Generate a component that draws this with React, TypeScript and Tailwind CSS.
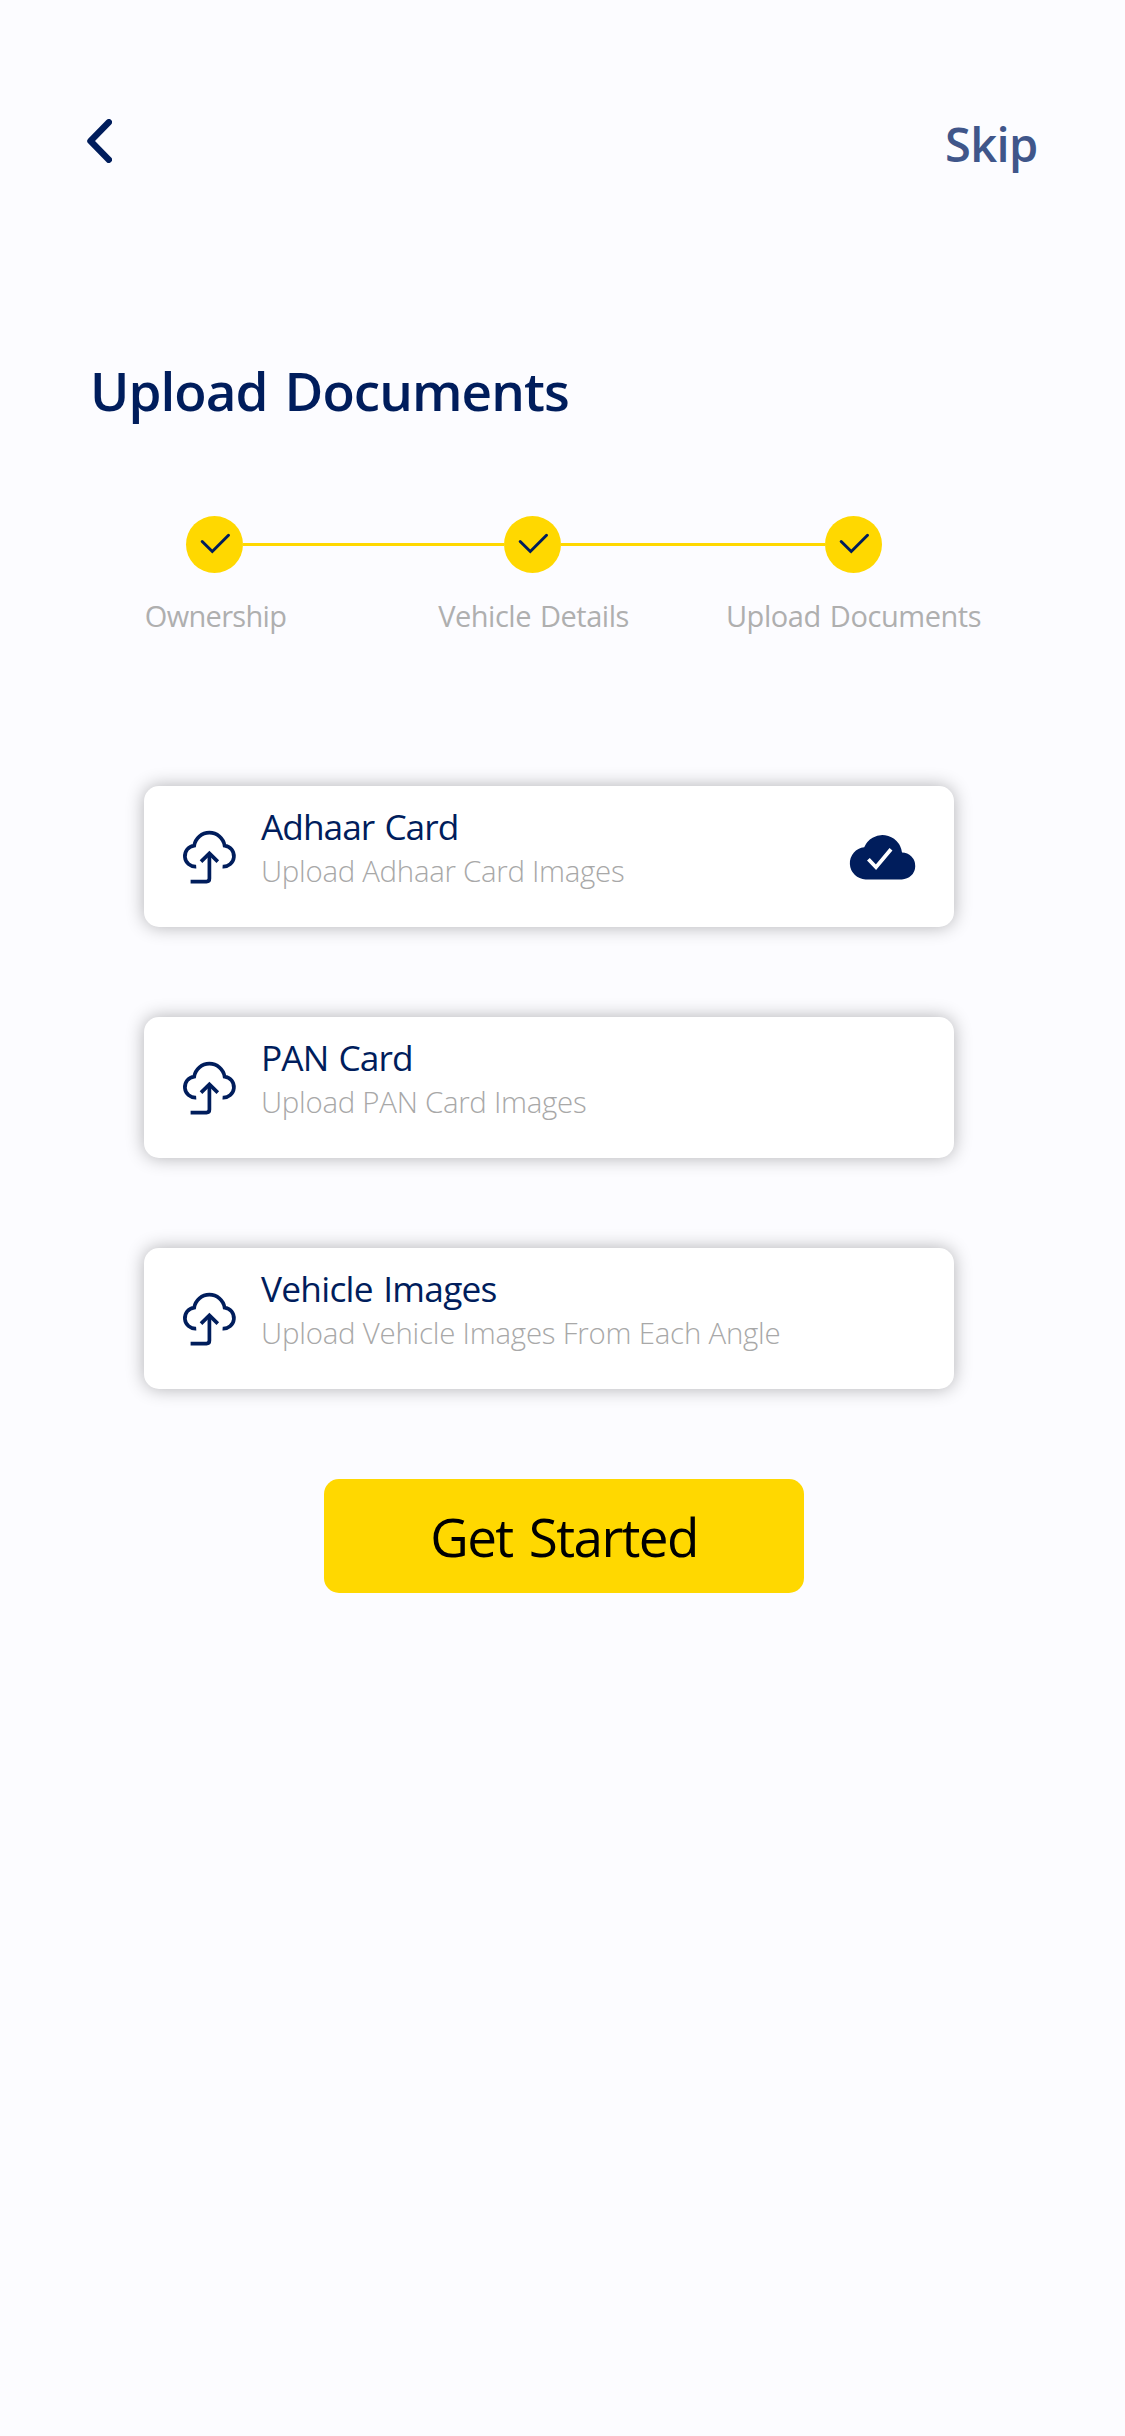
const steps = [
  { label: "Ownership", tracking: "tracking-[-0.68px] translate-x-px" },
  { label: "Vehicle Details", tracking: "tracking-[-0.48px] translate-x-px" },
  { label: "Upload Documents", tracking: "tracking-[-0.44px]" },
];

const documents = [
  {
    title: "Adhaar Card",
    titleTracking: "tracking-[-1px]",
    hint: "Upload Adhaar Card Images",
    hintTracking: "tracking-[-0.28px]",
    done: true,
  },
  {
    title: "PAN Card",
    titleTracking: "tracking-[-0.95px]",
    hint: "Upload PAN Card Images",
    hintTracking: "tracking-[-0.27px]",
    done: false,
  },
  {
    title: "Vehicle Images",
    titleTracking: "tracking-[-0.75px]",
    hint: "Upload Vehicle Images From Each Angle",
    hintTracking: "tracking-[-0.21px]",
    done: false,
  },
];

function BackIcon() {
  return (
    <svg width="25" height="44" viewBox="0 0 25 44" fill="none">
      <path d="M21.8 3.3 L3.5 22 L21.8 40.7" stroke="#001d5c" strokeWidth="6.5" strokeLinecap="round" strokeLinejoin="round" />
    </svg>
  );
}

function StepCheck() {
  return (
    <svg width="57" height="57" viewBox="0 0 57 57" fill="none">
      <path d="M16.2 25.5 L26.3 35.5 L42.5 19.3" stroke="#001d5c" strokeWidth="3" strokeLinecap="round" />
    </svg>
  );
}

function CloudUpload() {
  return (
    <svg width="53" height="53" viewBox="0 0 53 53" fill="none" stroke="#001d5c" strokeWidth="3.7" className="overflow-visible">
      <path d="M13.2 35.6 A10.55 10.55 0 0 1 11.2 14.6 A15.4 15.4 0 0 1 41.6 14.6 A10.55 10.55 0 0 1 39.6 35.6" />
      <path d="M18 30.6 L26.4 22.4 L34.8 30.6" />
      <path d="M26.4 22.6 V47.6 Q26.4 50.6 23.5 50.6 H7.6" />
    </svg>
  );
}

function CloudDone() {
  return (
    <svg width="66" height="46" viewBox="0 0 66 46" fill="none" className="overflow-visible">
      <path
        d="M16.6 45.4 A16.1 16.1 0 0 1 15.2 13.3 A19.7 19.7 0 0 1 53 18.5 A13.4 13.4 0 0 1 52.6 45.4 Z"
        fill="#001d5c"
      />
      <path d="M19.4 25.2 L27 33.2 L42 15.3" stroke="#ffffff" strokeWidth="3.8" />
    </svg>
  );
}

export default function App() {
  return (
    <main className="flex h-[2436px] w-[1125px] flex-col bg-[#fcfcff] font-['Open_Sans',sans-serif] text-[#001d5c]">
      <header className="flex items-start justify-between pt-[112px] pr-[86px] pl-[87px]">
        <button className="mt-[7px]" aria-label="Back">
          <BackIcon />
        </button>
        <button className="w-[94px] text-left text-[47px] leading-[64px] font-semibold tracking-[-0.64px] text-[#40568a]">
          Skip
        </button>
      </header>

      <h1 className="mt-[179px] ml-[90px] text-[53px] leading-[72px] font-semibold tracking-[-0.93px] [word-spacing:4px]">
        Upload Documents
      </h1>

      <div className="mt-[89px] ml-[186px] grid w-[696px] grid-cols-[57px_261px_57px_264px_57px]">
        {steps.map((step, i) => (
          <div key={step.label} className="contents">
            {i > 0 && <div className="mt-[27px] h-[3px] bg-[#ffd800]" />}
            <div className="flex flex-col items-center">
              <div className="size-[57px] rounded-full bg-[#ffd800]">
                <StepCheck />
              </div>
              <span
                className={`mt-[23px] text-[29px] leading-[40px] whitespace-nowrap text-[#afafaf] [word-spacing:2px] ${step.tracking}`}
              >
                {step.label}
              </span>
            </div>
          </div>
        ))}
      </div>

      <section className="mt-[150px] ml-[144px] flex w-[810px] flex-col gap-[90px]">
        {documents.map((doc) => (
          <div
            key={doc.title}
            className="flex h-[141px] items-start rounded-[15px] bg-white px-[39px] shadow-[0_0_18px_rgba(0,0,0,0.3)]"
          >
            <div className="mt-[45px]">
              <CloudUpload />
            </div>
            <div className="mt-4 ml-[25px] flex-1 whitespace-nowrap">
              <div className={`text-[35.3px] leading-[48px] [word-spacing:2px] ${doc.titleTracking}`}>{doc.title}</div>
              <div className={`mt-px text-[29.4px] leading-[40px] font-light text-[#a8a8a8] ${doc.hintTracking}`}>
                {doc.hint}
              </div>
            </div>
            {doc.done && (
              <div className="mt-[48px]">
                <CloudDone />
              </div>
            )}
          </div>
        ))}
      </section>

      <button className="mt-[90px] ml-[324px] h-[114px] w-[480px] rounded-[15px] bg-[#ffd800] pt-px text-[53px] leading-[72px] tracking-[-1.6px] text-black [word-spacing:4px]">
        Get Started
      </button>
    </main>
  );
}
